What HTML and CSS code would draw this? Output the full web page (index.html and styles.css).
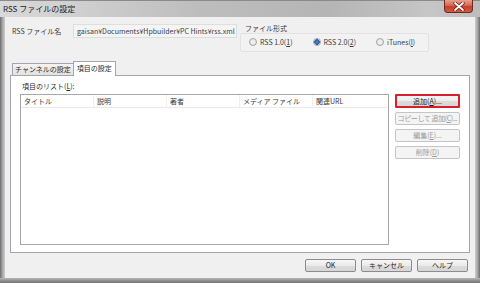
FILE: index.html
```html
<!DOCTYPE html>
<html lang="ja">
<head>
    <meta charset="UTF-8">
    <title>RSS ファイルの設定</title>
    <link rel="stylesheet" href="styles.css">
</head>
<body>
    <div class="window">
        <div class="titlebar">
            <span class="title">RSS ファイルの設定</span>
            <span class="close">
                <svg width="12" height="9" viewBox="0 0 12 9">
                    <path d="M2 1 L10 8 M10 1 L2 8" stroke="#5a1a14" stroke-width="3.2" stroke-linecap="round"/>
                    <path d="M2 1 L10 8 M10 1 L2 8" stroke="#ffffff" stroke-width="1.8" stroke-linecap="round"/>
                </svg>
            </span>
        </div>

        <div class="client">
            <!-- file name and format -->
            <div class="top">
                <span class="name-label">RSS ファイル名</span>
                <div class="path">gaisan¥Documents¥Hpbuilder¥PC Hints¥rss.xml</div>
                <div class="format">
                    <div class="format-label">ファイル形式</div>
                    <div class="format-box">
                        <label class="radio"><span class="dot"></span><span>RSS 1.0(<u>1</u>)</span></label>
                        <label class="radio"><span class="dot checked"></span><span>RSS 2.0(<u>2</u>)</span></label>
                        <label class="radio"><span class="dot"></span><span>iTunes(<u>I</u>)</span></label>
                    </div>
                </div>
            </div>

            <!-- tabs -->
            <div class="tabs">
                <span class="tab">チャンネルの設定</span>
                <span class="tab active">項目の設定</span>
            </div>

            <div class="panel">
                <div class="list-label">項目のリスト(<u>L</u>):</div>
                <div class="panel-body">
                    <div class="listview">
                        <div class="list-head">
                            <span class="col">タイトル</span>
                            <span class="col">説明</span>
                            <span class="col">著者</span>
                            <span class="col">メディア ファイル</span>
                            <span class="col last">関連URL</span>
                        </div>
                    </div>
                    <div class="side-buttons">
                        <button class="btn marked">追加(<u>A</u>)...</button>
                        <button class="btn tight" disabled>コピーして 追加(<u>C</u>)...</button>
                        <button class="btn" disabled>編集(<u>E</u>)...</button>
                        <button class="btn" disabled>削除(<u>D</u>)</button>
                    </div>
                </div>
            </div>

            <div class="footer">
                <button class="btn wide">OK</button>
                <button class="btn wide">キャンセル</button>
                <button class="btn wide">ヘルプ</button>
            </div>
        </div>
        <div class="bottom-frame"></div>
    </div>
</body>
</html>
```

FILE: styles.css
```css
/* Reset */
* {
    margin: 0;
    padding: 0;
    box-sizing: border-box;
}

body {
    font-family: "Noto Sans CJK JP", "Noto Sans", sans-serif;
    font-size: 7px;
    color: #1e1e1e;
    background: #ffffff;
}

.window {
    width: 480px;
    height: 283px;
    display: flex;
    flex-direction: column;
    background: linear-gradient(to right, #6e6e6e 0, #9a9a9a 2px, #c4c4c4 4px, #c4c4c4 476px, #9a9a9a 478px, #6e6e6e 480px);
}

/* Title bar */
.titlebar {
    height: 18px;
    display: flex;
    justify-content: space-between;
    align-items: flex-start;
    padding: 0 7px 0 3px;
    background: linear-gradient(to right, #d9d9d9 0, #cfcfcf 80px, #bdbdbd 200px, #b5b5b5 330px, #c6c6c6 430px, #bcbcbc 480px);
    border-top: 1px solid #8a8a8a;
}

.title {
    font-size: 8px;
    line-height: 15px;
    color: #1a1a1a;
}

.close {
    width: 29px;
    height: 13px;
    margin-top: -1px;
    display: flex;
    align-items: center;
    justify-content: center;
    border: 1px solid #6b2a22;
    border-top: none;
    border-radius: 0 0 4px 4px;
    background: linear-gradient(to bottom, #e9a08e 0, #d26a55 45%, #c4402b 55%, #d8583f 100%);
}

/* Client area */
.client {
    flex: 1;
    margin: 0 5px;
    background: #f0f0f0;
    display: flex;
    flex-direction: column;
    padding: 6px 5px 6px 5px;
}

.top {
    display: flex;
    align-items: flex-start;
    height: 36px;
}

.name-label {
    width: 63px;
    padding-left: 2px;
    margin-top: 3px;
    line-height: 11px;
    color: #3a3a3a;
}

.path {
    width: 164px;
    height: 14px;
    margin-top: 1px;
    padding-left: 3px;
    line-height: 13px;
    font-size: 7px;
    color: #3c3c3c;
    background: #f4f4f4;
    border: 1px solid #dedede;
    white-space: nowrap;
    overflow: hidden;
}

.format {
    margin-left: 3px;
}

.format-label {
    padding-left: 5px;
    line-height: 10px;
    color: #3a3a3a;
}

.format-box {
    width: 189px;
    height: 19px;
    display: flex;
    align-items: center;
    padding-left: 8px;
    gap: 20px;
    border: 1px solid #e2e2e2;
    border-radius: 2px;
    background: #f2f2f2;
}

.radio {
    display: flex;
    align-items: center;
    gap: 3px;
    color: #3a3a3a;
}

.dot {
    width: 8px;
    height: 8px;
    border-radius: 50%;
    border: 1px solid #a4a4a4;
    background: radial-gradient(circle, #f7f7f7 0, #dcdcdc 100%);
}

.dot.checked {
    background: radial-gradient(circle, #4f86d4 0, #2a5ba8 60%, #dcdcdc 70%);
}

/* Tabs */
.tabs {
    display: flex;
    align-items: flex-end;
    height: 16px;
    padding-left: 2px;
}

.tab {
    height: 12px;
    padding: 0 2px;
    line-height: 11px;
    border: 1px solid #a3a6ad;
    border-bottom: none;
    background: linear-gradient(to bottom, #f3f3f3, #e2e2e2);
    color: #2a2a2a;
}

.tab.active {
    height: 15px;
    padding: 0 3px;
    margin-left: -1px;
    line-height: 13px;
    background: #ffffff;
    position: relative;
    top: 1px;
}

.panel {
    height: 178px;
    background: #ffffff;
    border: 1px solid #a3a6ad;
    padding: 5px 9px 8px 9px;
    display: flex;
    flex-direction: column;
}

.list-label {
    line-height: 11px;
    padding-left: 2px;
    color: #2a2a2a;
}

.panel-body {
    flex: 1;
    display: flex;
    align-items: flex-start;
    margin-top: 2px;
}

.listview {
    width: 369px;
    height: 151px;
    border: 1px solid #a8a8a8;
    background: #ffffff;
}

.list-head {
    display: flex;
    height: 13px;
    line-height: 12px;
    border-bottom: 1px solid #eaeaea;
}

.col {
    width: 73px;
    padding-left: 3px;
    color: #3a3a3a;
    border-right: 1px solid #f0f0f0;
}

.col.last {
    flex: 1;
    border-right: none;
}

.side-buttons {
    display: flex;
    flex-direction: column;
    gap: 4px;
    margin-left: 6px;
}

.btn {
    font-family: "Noto Sans CJK JP", "Noto Sans", sans-serif;
    font-size: 7px;
    width: 65px;
    height: 13px;
    line-height: 11px;
    padding: 0;
    white-space: nowrap;
    color: #1e1e1e;
    border: 1px solid #8c8c8c;
    border-radius: 2px;
    background: linear-gradient(to bottom, #f6f6f6 0, #ebebeb 50%, #dcdcdc 51%, #d6d6d6 100%);
}

.btn.tight {
    letter-spacing: -0.4px;
}

.btn:disabled {
    color: #9a9a9a;
    border-color: #c2c4c6;
    background: #f4f4f4;
}

.btn.marked {
    border: 2px solid #d6202c;
    border-radius: 1px;
    height: 14px;
}

/* Dialog buttons */
.footer {
    display: flex;
    justify-content: flex-end;
    gap: 5px;
    margin-top: 6px;
    padding-right: 2px;
}

.btn.wide {
    width: 51px;
}

.bottom-frame {
    height: 6px;
    background: linear-gradient(to bottom, #b8b8b8 0, #8c8c8c 3px, #6a6a6a 6px);
}
```
